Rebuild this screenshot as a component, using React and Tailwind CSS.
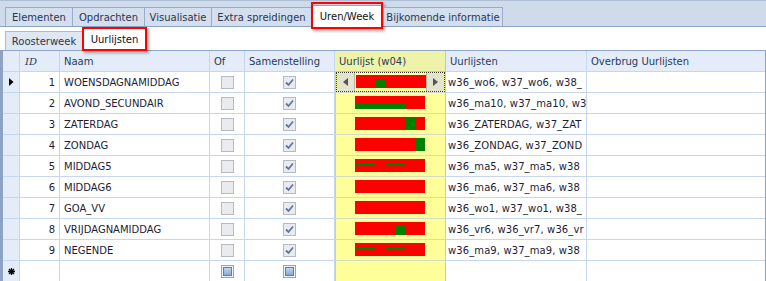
import React from "react";

const tabs = [
  { label: "Elementen", w: 67 },
  { label: "Opdrachten", w: 72 },
  { label: "Visualisatie", w: 67 },
  { label: "Extra spreidingen", w: 100 },
  { label: "Uren/Week", w: 72, active: true },
  { label: "Bijkomende informatie", w: 120, last: true },
];

const rows = [
  { id: 1, naam: "WOENSDAGNAMIDDAG", lijst: "w36_wo6, w37_wo6, w38_", segs: [[20, 4, 10, 9]] },
  { id: 2, naam: "AVOND_SECUNDAIR", lijst: "w36_ma10, w37_ma10, w3", segs: [[0, 8, 50, 5], [40, 7, 10, 6]] },
  { id: 3, naam: "ZATERDAG", lijst: "w36_ZATERDAG, w37_ZAT", segs: [[50, 0, 10, 13]] },
  { id: 4, naam: "ZONDAG", lijst: "w36_ZONDAG, w37_ZOND", segs: [[60, 0, 10, 13]] },
  { id: 5, naam: "MIDDAG5", lijst: "w36_ma5, w37_ma5, w38", segs: [[0, 5, 20, 1], [30, 5, 20, 1]] },
  { id: 6, naam: "MIDDAG6", lijst: "w36_ma6, w37_ma6, w38", segs: [[0, 5, 20, 1], [30, 5, 20, 1]] },
  { id: 7, naam: "GOA_VV", lijst: "w36_wo1, w37_wo1, w38_", segs: [[20, 0, 10, 1]] },
  { id: 8, naam: "VRIJDAGNAMIDDAG", lijst: "w36_vr6, w36_vr7, w36_vr", segs: [[40, 4, 10, 9]] },
  { id: 9, naam: "NEGENDE", lijst: "w36_ma9, w37_ma9, w38", segs: [[0, 5, 20, 1], [30, 5, 20, 1]] },
];

// uurbalk: rood = bezet, groen = vrij
const Bar = ({ segs }) => (
  <div className="relative w-[70px] h-[13px] bg-[#ff0000]">
    {segs.map(([x, y, w, h], i) => (
      <div
        key={i}
        className="absolute bg-[#008000]"
        style={{ left: x, top: y, width: w, height: h }}
      />
    ))}
  </div>
);

const Box = ({ checked }) => (
  <div className="w-[13px] h-[13px] border border-[#b4bac6] bg-[#e9ebef] flex items-center justify-center">
    {checked && (
      <svg width="9" height="9" viewBox="0 0 9 9">
        <path d="M1 4.5 L3.5 7 L8 1.5" stroke="#60779c" strokeWidth="1.8" fill="none" />
      </svg>
    )}
  </div>
);

const NewBox = () => (
  <div className="w-[13px] h-[13px] border border-[#8ea5c6] bg-[#eef3fa] flex items-center justify-center">
    <div className="w-[9px] h-[9px] border border-[#5a7fb3] bg-gradient-to-b from-[#c3d6ef] to-[#86a8d6]" />
  </div>
);

const cell = "h-[21px] border-r border-b border-[#c6d6ec] flex items-center shrink-0";

export default function App() {
  return (
    <div
      className="w-[766px] h-[281px] overflow-hidden bg-white text-[10px] text-[#1c1c36]"
      style={{ fontFamily: '"DejaVu Sans", Tahoma, sans-serif' }}
    >
      {/* hoofdtabs */}
      <div className="h-[27px] bg-[#cfdbeb] border-t border-[#aebfd6] border-b border-b-[#8ca5c5] flex items-end pl-[5px]">
        {tabs.map((t) => (
          <div
            key={t.label}
            style={{ width: t.w }}
            className={`relative shrink-0 flex items-center justify-center ${
              t.active
                ? "h-[22px] -mb-px bg-white border-t border-[#8ca5c5] text-[#111]"
                : `h-[19px] bg-[#d3dfee] border-l border-t border-[#97adcb] text-[#2a3550] ${t.last ? "border-r" : ""}`
            }`}
          >
            {t.label}
            {t.active && (
              <div className="absolute left-0 -top-[4px] w-[72px] h-[27px] border-2 border-[#ff0000] shadow-[2px_2px_3px_rgba(0,0,0,0.35)]" />
            )}
          </div>
        ))}
      </div>

      {/* subtabs */}
      <div className="h-[23px] flex items-end pl-[5px]">
        <div className="w-[77px] h-[19px] bg-[#dfe7f2] border-l border-t border-[#a9bbd4] flex items-center justify-center text-[#2a3550]">
          Roosterweek
        </div>
        <div className="relative w-[65px] h-[23px] bg-white flex items-center justify-center pt-[1px] text-[#111]">
          Uurlijsten
          <div className="absolute left-0 top-0 w-[65px] h-[24px] border-2 border-[#ff0000] shadow-[2px_2px_3px_rgba(0,0,0,0.35)]" />
        </div>
      </div>

      {/* grid */}
      <div className="border-l-[3px] border-[#8ea3c1] border-r border-r-[#8ea3c1]">
        <div className="flex border-t border-[#8fa7c8] bg-[#e3ecf8] text-[#283a5a]">
          <div className={`${cell} h-[20px] w-[17px] border-[#b7c9e2]`} />
          <div className={`${cell} h-[20px] w-[40px] pl-[5px] italic border-[#b7c9e2]`} style={{ fontFamily: '"DejaVu Serif", serif' }}>ID</div>
          <div className={`${cell} h-[20px] w-[150px] pl-[4px] border-[#b7c9e2]`}>Naam</div>
          <div className={`${cell} h-[20px] w-[35px] pl-[4px] border-[#b7c9e2]`}>Of</div>
          <div className={`${cell} h-[20px] w-[90px] pl-[4px] border-[#b7c9e2]`}>Samenstelling</div>
          <div className={`${cell} h-[20px] w-[111px] pl-[4px] bg-[#eef3a9] border-[#c9cf8e]`}>Uurlijst (w04)</div>
          <div className={`${cell} h-[20px] w-[141px] pl-[4px] border-[#b7c9e2]`}>Uurlijsten</div>
          <div className={`${cell} h-[20px] flex-1 pl-[4px] border-r-0 border-[#b7c9e2]`}>Overbrug Uurlijsten</div>
        </div>

        {rows.map((r, i) => (
          <div key={r.id} className="flex">
            <div className={`${cell} w-[17px] bg-[#e4ecf7] justify-center`}>
              {i === 0 && (
                <svg width="5" height="8" viewBox="0 0 5 8">
                  <path d="M0 0 L4.5 4 L0 8 Z" fill="#000" />
                </svg>
              )}
            </div>
            <div className={`${cell} w-[40px] justify-end pr-[4px]`}>{r.id}</div>
            <div className={`${cell} w-[150px] pl-[4px]`}>{r.naam}</div>
            <div className={`${cell} w-[35px] justify-center`}><Box /></div>
            <div className={`${cell} w-[90px] justify-center`}><Box checked /></div>
            {i === 0 ? (
              <div className={`${cell} w-[111px] bg-[#ffff99] border-r-[#cfd08a] border-b-[#d3dcc4] border-l border-l-[#d2d38d]`}>
                <div className="w-full h-full border border-dotted border-[#333] flex items-start justify-between">
                  <div className="w-[18px] h-full bg-[#e2e4cd] border-r border-[#b3b8a2] flex items-center justify-center">
                    <svg width="5" height="8" viewBox="0 0 5 8"><path d="M5 0 L0 4 L5 8 Z" fill="#555" /></svg>
                  </div>
                  <div className="pt-[2px]"><Bar segs={r.segs} /></div>
                  <div className="w-[18px] h-full bg-[#e2e4cd] border-l border-[#b3b8a2] flex items-center justify-center">
                    <svg width="5" height="8" viewBox="0 0 5 8"><path d="M0 0 L5 4 L0 8 Z" fill="#555" /></svg>
                  </div>
                </div>
              </div>
            ) : (
              <div className="h-[21px] w-[111px] shrink-0 bg-[#ffff99] border-r border-b border-r-[#cfd08a] border-b-[#d3dcc4] border-l border-l-[#d2d38d] pl-[19px] pt-[3px]">
                <Bar segs={r.segs} />
              </div>
            )}
            <div className={`${cell} w-[141px] pl-[2px] overflow-hidden whitespace-nowrap tracking-[0.1px]`}>{r.lijst}</div>
            <div className={`${cell} flex-1 border-r-0`} />
          </div>
        ))}

        <div className="flex">
          <div className={`${cell} w-[17px] bg-[#e4ecf7] justify-center`}>
            <svg width="7" height="7" viewBox="0 0 7 7">
              <path d="M3.5 0 V7 M0 3.5 H7 M1 1 L6 6 M6 1 L1 6" stroke="#000" strokeWidth="1.3" />
            </svg>
          </div>
          <div className={`${cell} w-[40px]`} />
          <div className={`${cell} w-[150px]`} />
          <div className={`${cell} w-[35px] justify-center`}><NewBox /></div>
          <div className={`${cell} w-[90px] justify-center`}><NewBox /></div>
          <div className={`${cell} w-[111px] bg-[#ffff99] border-r-[#cfd08a] border-l border-l-[#d2d38d]`} />
          <div className={`${cell} w-[141px]`} />
          <div className={`${cell} flex-1 border-r-0`} />
        </div>
      </div>
    </div>
  );
}
